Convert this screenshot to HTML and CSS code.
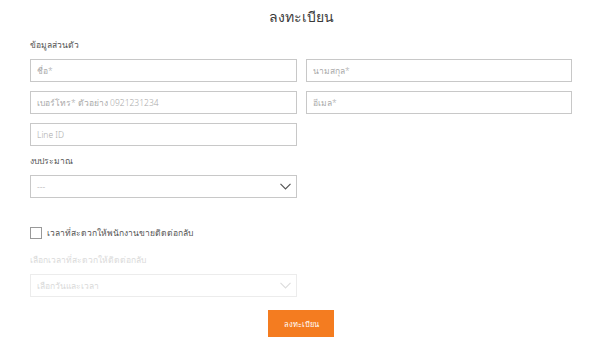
FILE: index.html
```html
<!DOCTYPE html>
<html lang="th">

<head>
  <meta charset="UTF-8">
  <meta name="viewport" content="width=device-width, initial-scale=1.0">
  <title>ลงทะเบียน</title>
  <link rel="stylesheet" href="styles.css">
</head>

<body>
  <div class="register">
    <h1 class="title">ลงทะเบียน</h1>
    <form class="form">
      <p class="label">ข้อมูลส่วนตัว</p>
      <div class="grid">
        <input class="field" type="text" placeholder="ชื่อ*">
        <input class="field" type="text" placeholder="นามสกุล*">
        <input class="field" type="text" placeholder="เบอร์โทร* ตัวอย่าง 0921231234">
        <input class="field" type="text" placeholder="อีเมล*">
        <input class="field" type="text" placeholder="Line ID">
      </div>
      <p class="label budget">งบประมาณ</p>
      <div class="select">
        <span>---</span>
        <svg width="11" height="7" viewBox="0 0 11 7"><path d="M0.5 0.8 L5.5 5.8 L10.5 0.8" fill="none" stroke="#555" stroke-width="1.2"/></svg>
      </div>
      <label class="check">
        <span class="box"></span>
        <span>เวลาที่สะดวกให้พนักงานขายติดต่อกลับ</span>
      </label>
      <p class="label muted">เลือกเวลาที่สะดวกให้ติดต่อกลับ</p>
      <div class="select disabled">
        <span>เลือกวันและเวลา</span>
        <svg width="11" height="7" viewBox="0 0 11 7"><path d="M0.5 0.8 L5.5 5.8 L10.5 0.8" fill="none" stroke="#ddd" stroke-width="1.2"/></svg>
      </div>
      <div class="actions">
        <button class="submit" type="button">ลงทะเบียน</button>
      </div>
    </form>
  </div>
</body>

</html>
```

FILE: styles.css
```css
body {
  margin: 0;
  padding: 0;
  background: #fff;
  color: #333;
  font-family: 'Noto Sans', 'DejaVu Sans', sans-serif;
  font-weight: 300;
}

.register {
  width: 542px;
  margin: 0 0 0 30px;
  padding-top: 6px;
}

.title {
  margin: 0;
  text-align: center;
  font-size: 14px;
  font-weight: 300;
  line-height: 22px;
  color: #3a3a3a;
}

.form {
  margin: 0;
}

.label {
  margin: 10px 0 0;
  font-size: 8.5px;
  line-height: 14px;
  color: #555;
}

.label.budget {
  margin-top: 8px;
}

.label.muted {
  margin-top: 13px;
  color: #dadada;
}

.grid {
  display: grid;
  grid-template-columns: 267px 266px;
  column-gap: 9px;
  row-gap: 9px;
  margin-top: 7px;
}

.field {
  box-sizing: border-box;
  height: 23px;
  margin: 0;
  padding: 0 6px;
  border: 1px solid #c8c8c8;
  border-radius: 0;
  font-family: inherit;
  font-weight: 300;
  font-size: 8.5px;
  color: #333;
}

.field::placeholder {
  color: #aaa;
}

.select {
  box-sizing: border-box;
  width: 267px;
  height: 23px;
  margin-top: 7px;
  padding: 0 5px 0 6px;
  border: 1px solid #c8c8c8;
  display: flex;
  align-items: center;
  justify-content: space-between;
  font-size: 8.5px;
  color: #aaa;
}

.select.disabled {
  border-color: #ececec;
  color: #dadada;
}

.check {
  display: flex;
  align-items: center;
  gap: 5px;
  margin-top: 28px;
  font-size: 8.5px;
  color: #555;
}

.box {
  box-sizing: border-box;
  width: 12px;
  height: 12px;
  border: 1px solid #999;
}

.actions {
  display: flex;
  justify-content: center;
  margin-top: 13px;
}

.submit {
  width: 66px;
  height: 27px;
  border: none;
  background: #f47c20;
  color: #fff;
  font-family: inherit;
  font-weight: 300;
  font-size: 7.5px;
  padding: 0;
}
```
